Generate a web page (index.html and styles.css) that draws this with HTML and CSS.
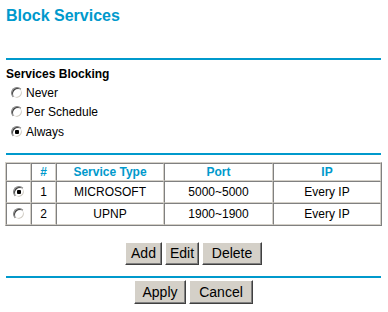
FILE: index.html
```html
<!DOCTYPE html>
<html lang="en">
<head>
    <meta charset="UTF-8">
    <title>Block Services</title>
    <link rel="stylesheet" href="styles.css">
</head>
<body>

<div class="page">
    <h1 class="title">Block Services</h1>
    <div class="rule rule-top"></div>

    <div class="section-head">Services Blocking</div>
    <label class="opt"><input type="radio" name="block" class="radio"> Never</label>
    <label class="opt"><input type="radio" name="block" class="radio"> Per Schedule</label>
    <label class="opt"><input type="radio" name="block" class="radio" checked> Always</label>

    <div class="rule rule-mid"></div>

    <table class="services">
        <tr class="head">
            <th class="c-sel"></th>
            <th class="c-num">#</th>
            <th class="c-type">Service Type</th>
            <th class="c-port">Port</th>
            <th class="c-ip">IP</th>
        </tr>
        <tr>
            <td><input type="radio" name="svc" class="radio" checked></td>
            <td>1</td>
            <td>MICROSOFT</td>
            <td>5000~5000</td>
            <td>Every IP</td>
        </tr>
        <tr>
            <td><input type="radio" name="svc" class="radio"></td>
            <td>2</td>
            <td>UPNP</td>
            <td>1900~1900</td>
            <td>Every IP</td>
        </tr>
    </table>

    <div class="buttons buttons-edit">
        <button class="btn btn-add">Add</button>
        <button class="btn btn-edit">Edit</button>
        <button class="btn btn-delete">Delete</button>
    </div>

    <div class="rule rule-bottom"></div>

    <div class="buttons buttons-apply">
        <button class="btn btn-apply">Apply</button>
        <button class="btn btn-cancel">Cancel</button>
    </div>
</div>

</body>
</html>
```

FILE: styles.css
```css
body {
    margin: 0;
    background: #ffffff;
    font-family: 'Liberation Sans', Arial, sans-serif;
    font-size: 12px;
    color: #000000;
}
.page {
    padding: 7px 7px 0 6px;
}
.title {
    margin: 0;
    font-size: 16px;
    line-height: 18px;
    font-weight: bold;
    color: #0099cc;
}
.rule {
    height: 2px;
    background: #0099cc;
}
.rule-top {
    margin-top: 33px;
}
.rule-mid {
    margin-top: 11px;
}
.rule-bottom {
    margin-top: 11px;
}
.section-head {
    margin-top: 7px;
    line-height: 14px;
    font-weight: bold;
}
.opt {
    display: flex;
    align-items: center;
    height: 19.5px;
    padding-left: 5px;
}
.opt:first-of-type {
    margin-top: 2px;
}
.opt .radio {
    margin-right: 3px;
}

/* windows style radio */
.radio {
    appearance: none;
    -webkit-appearance: none;
    width: 12px;
    height: 12px;
    margin: 0;
    border-radius: 50%;
    border: 1px solid;
    border-color: #808080 #ffffff #ffffff #808080;
    box-shadow: inset 1px 1px 0 #404040, inset -1px -1px 0 #d4d0c8;
    background: #ffffff;
    vertical-align: middle;
}
.radio:checked {
    background: radial-gradient(circle, #000000 0 2px, #ffffff 2.5px);
}

.services {
    width: 377px;
    margin: 7px 0 0 -1px;
    border-collapse: separate;
    border-spacing: 0;
    border: 1px solid;
    border-color: #d4d0c8 #808080 #808080 #d4d0c8;
}
.services th,
.services td {
    border: 1px solid;
    border-color: #808080 #d4d0c8 #d4d0c8 #808080;
    text-align: center;
    padding: 0;
}
.services th {
    height: 16px;
    color: #0099cc;
    font-weight: bold;
}
.services td {
    height: 20px;
}
.c-sel { width: 23px; }
.c-num { width: 23px; }
.c-type { width: 106px; }
.c-port { width: 107px; }

.buttons {
    display: flex;
    justify-content: center;
    gap: 3px;
}
.buttons-edit {
    margin-top: 16px;
}
.buttons-apply {
    margin-top: 2px;
}
.btn {
    height: 23px;
    padding: 0;
    font-family: 'Liberation Sans', Arial, sans-serif;
    font-size: 14px;
    color: #000000;
    background: #d4d0c8;
    border: 1px solid;
    border-color: #ffffff #404040 #404040 #ffffff;
    box-shadow: inset -1px -1px 0 #808080;
    border-radius: 0;
}
.btn-add { width: 37px; }
.btn-edit { width: 34px; }
.btn-delete { width: 60px; }
.btn-apply { width: 52px; height: 24px; }
.btn-cancel { width: 64px; height: 24px; }
```
